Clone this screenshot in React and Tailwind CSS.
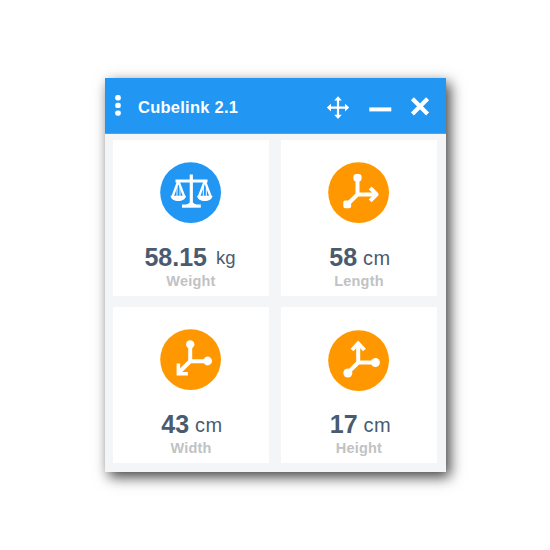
const stroke = { fill: 'none', stroke: '#fff', strokeWidth: 4, strokeLinejoin: 'round' };

function Scales() {
  return (
    <g fill="none" stroke="#fff">
      <path d="M31.3 12.5v31" strokeWidth="3.2" />
      <path d="M15.5 19h32" strokeWidth="2.8" />
      <path d="M22 44.1h18.8" strokeWidth="3.2" />
      <path d="M26.3 43.3l5-3 5 3z" fill="#fff" />
      <path d="M18.3 19L12.4 35M18.3 19L24.4 35M44.8 19L38.8 35M44.8 19L50.8 35" strokeWidth="2.3" />
      <path d="M17 24v11M20 24v11M43.4 24v11M46.4 24v11" strokeWidth="1.2" opacity="0.8" />
      <path d="M10.6 33.8h15.4c-.4 7-15 7-15.4 0zM37.1 33.8h15.4c-.4 7-15 7-15.4 0z" fill="#fff" stroke="none" />
    </g>
  );
}

function LengthAxis() {
  return (
    <g {...stroke}>
      <path d="M29.5 15.5v17L18.8 43M29.5 32.4h18.3" />
      <path d="M42.2 25.9l6.4 6.5-6.4 6.5" strokeWidth="4" />
      <rect x="25.4" y="12" width="8.2" height="7.6" rx="3" fill="#fff" stroke="none" />
      <rect x="15.3" y="38.6" width="7.8" height="7.6" rx="2" fill="#fff" stroke="none" />
    </g>
  );
}

function WidthAxis() {
  return (
    <g {...stroke}>
      <path d="M30.2 15.5v16.8L18.6 43.7M30.2 32.3h17" />
      <path d="M18.4 34.6v10.2h9.4" strokeWidth="3.6" strokeLinejoin="miter" />
      <circle cx="30.2" cy="15.4" r="4.2" fill="#fff" stroke="none" />
      <circle cx="47.6" cy="32" r="4.4" fill="#fff" stroke="none" />
    </g>
  );
}

function HeightAxis() {
  return (
    <g {...stroke}>
      <path d="M30.2 14v18.5L20 42.7M30.2 32.5h17" />
      <path d="M24 20l6.2-6.6 6.2 6.6" strokeWidth="3.8" strokeLinejoin="miter" />
      <circle cx="19.8" cy="43" r="4.5" fill="#fff" stroke="none" />
      <circle cx="47.4" cy="32.5" r="4.5" fill="#fff" stroke="none" />
    </g>
  );
}

function Card({ value, unit, label, color, drop, rowClass, unitClass, children }) {
  return (
    <div className="flex h-[156px] w-[156px] flex-col items-center bg-white">
      <div className={drop ? 'h-[105px] pt-[23px] pr-px' : 'h-[105px] pt-[22px] pr-px'}>
        <svg width="61" height="62" viewBox="0 0 61 62">
          <circle cx="30.6" cy="30.6" r="30.4" fill={color} />
          {children}
        </svg>
      </div>
      <div className={`flex h-[24px] items-start leading-[24px] whitespace-nowrap text-[#4a5b70] ${rowClass}`}>
        <span className="text-[25px] font-bold">{value}</span>
        <span className={unitClass}>{unit}</span>
      </div>
      <div className="mt-[4px] text-[14.5px] leading-[16px] font-bold tracking-[0.2px] whitespace-nowrap text-[#c1c2c4]">{label}</div>
    </div>
  );
}

export default function App() {
  return (
    <div className="h-[550px] w-[550px] overflow-hidden bg-white pt-[78px] pl-[105px] font-['Liberation_Sans',Arial,sans-serif]">
      <div className="h-[394px] w-[341px] bg-[#f4f5f7] shadow-[4px_5px_13px_0px_rgba(0,0,0,0.75)]">
        <header className="flex h-[56px] items-center border-b border-[#42a5f5] bg-[#2196f3] text-white">
          <svg className="ml-[9px]" width="8" height="56" viewBox="0 0 8 56" fill="#fff">
            <rect x="1.2" y="17" width="5.6" height="5.4" rx="2.2" />
            <rect x="1.2" y="24.7" width="5.6" height="5.4" rx="2.2" />
            <rect x="1.2" y="32.4" width="5.6" height="5.4" rx="2.2" />
          </svg>
          <h1 className="ml-[16px] pt-[3px] text-[16.5px] leading-[20px] font-bold tracking-[0.25px] whitespace-nowrap">Cubelink 2.1</h1>
          <svg className="mr-px ml-auto" width="120" height="56" viewBox="0 0 120 56" fill="none" stroke="#fff">
            <path d="M13 20v19M3.5 29.6h19" strokeWidth="2.2" />
            <path d="M13 18.3l3.8 4.2H9.2zM13 40.9l3.8-4.2H9.2zM1.8 29.6l4.2-3.8v7.6zM24.2 29.6l-4.2-3.8v7.6z" fill="#fff" stroke="none" />
            <path d="M44.3 31.4h22" strokeWidth="4" />
            <path d="M87.4 20.8l15.2 15.2M102.6 20.8L87.4 36" strokeWidth="4.2" />
          </svg>
        </header>
        <main className="grid grid-cols-[156px_156px] gap-x-[12px] gap-y-[11px] pt-[6px] pl-[8px]">
          <Card value="58.15" unit="kg" label="Weight" color="#2196f3" rowClass="pr-[2px]" unitClass="ml-[9px] pt-px text-[18.5px]"><Scales /></Card>
          <Card value="58" unit="cm" label="Length" color="#ff9800" rowClass="pl-[2px]" unitClass="ml-[6px] pt-px text-[20px] tracking-[0.5px]"><LengthAxis /></Card>
          <Card value="43" unit="cm" label="Width" color="#ff9800" rowClass="pl-[2px]" unitClass="ml-[6px] pt-px text-[20px] tracking-[0.5px]"><WidthAxis /></Card>
          <Card value="17" unit="cm" label="Height" color="#ff9800" drop rowClass="pl-[3px]" unitClass="ml-[6px] pt-px text-[20px] tracking-[0.5px]"><HeightAxis /></Card>
        </main>
      </div>
    </div>
  );
}
